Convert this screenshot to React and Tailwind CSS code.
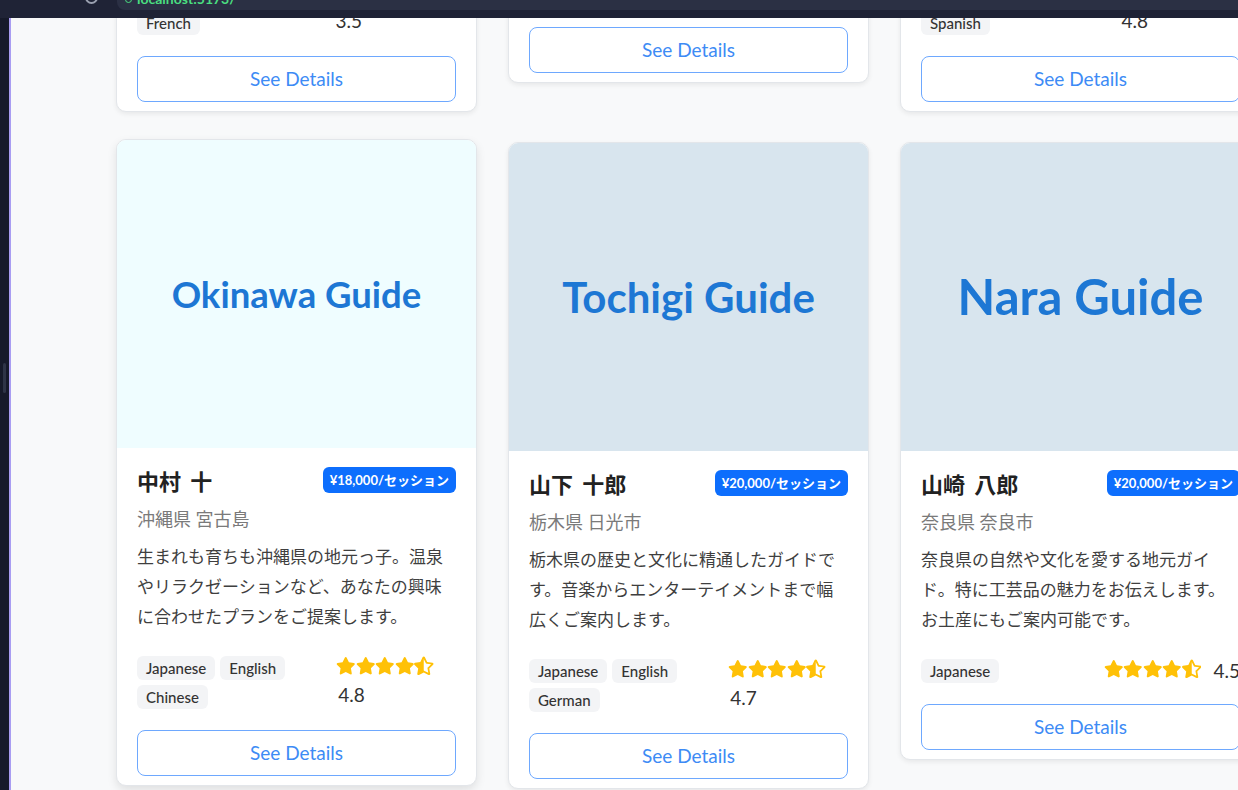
import { FaStar, FaStarHalfAlt, FaRegStar } from 'react-icons/fa'

const guides = [
  {
    title: 'Kyoto Guide', titleSize: 'text-[44px]', bg: 'bg-[#fdf3f5]',
    name: '佐藤 花子', place: '京都府 京都市', price: '¥15,000/セッション',
    desc: '京都の寺社仏閣や伝統文化をご案内します。茶道や着物体験など、古都の魅力をお届けします。',
    langs: ['Japanese', 'English', 'French'], rating: 3.5
  },
  {
    title: 'Osaka Guide', titleSize: 'text-[44px]', bg: 'bg-[#fff6e8]',
    name: '田中 一郎', place: '大阪府 大阪市', price: '¥12,000/セッション',
    desc: '大阪の食べ歩きならお任せください。地元の名店から定番の観光スポットまで楽しくご案内します。',
    langs: ['Japanese', 'Korean'], rating: 4.2
  },
  {
    title: 'Hokkaido Guide', titleSize: 'text-[38px]', bg: 'bg-[#eef6ee]',
    name: '鈴木 次郎', place: '北海道 札幌市', price: '¥22,000/セッション',
    desc: '北海道の大自然をガイドします。四季折々の絶景やグルメ、アウトドア体験まで幅広くご提案します。',
    langs: ['Japanese', 'English', 'Spanish'], rating: 4.8
  },
  {
    title: 'Okinawa Guide', titleSize: 'text-[36.5px]', bg: 'bg-[#effdff]',
    name: '中村 十', place: '沖縄県 宮古島', price: '¥18,000/セッション',
    desc: '生まれも育ちも沖縄県の地元っ子。温泉やリラクゼーションなど、あなたの興味に合わせたプランをご提案します。',
    langs: ['Japanese', 'English', 'Chinese'], rating: 4.8, hover: true
  },
  {
    title: 'Tochigi Guide', titleSize: 'text-[42px]', bg: 'bg-[#d8e5ee]',
    name: '山下 十郎', place: '栃木県 日光市', price: '¥20,000/セッション',
    desc: '栃木県の歴史と文化に精通したガイドです。音楽からエンターテイメントまで幅広くご案内します。',
    langs: ['Japanese', 'English', 'German'], rating: 4.7
  },
  {
    title: 'Nara Guide', titleSize: 'text-[49px]', bg: 'bg-[#d8e5ee]',
    name: '山崎 八郎', place: '奈良県 奈良市', price: '¥20,000/セッション',
    desc: '奈良県の自然や文化を愛する地元ガイド。特に工芸品の魅力をお伝えします。お土産にもご案内可能です。',
    langs: ['Japanese'], rating: 4.5
  }
]

function Stars({ value }) {
  const full = Math.floor(value)
  const half = value - full >= 0.5
  return (
    <div className="flex h-[19.5px] items-center text-[#ffc107]">
      {[0, 1, 2, 3, 4].map(i =>
        i < full ? <FaStar key={i} size={19.5} />
          : i === full && half ? <FaStarHalfAlt key={i} size={19.5} />
            : <FaRegStar key={i} size={19.5} />
      )}
    </div>
  )
}

function GuideCard({ g }) {
  return (
    <div className={`bg-white rounded-[10px] border border-[#e3e6ea] overflow-hidden ${g.hover ? '-translate-y-[3px] shadow-[0_4px_10px_rgba(0,0,0,0.10)]' : 'shadow-[0_2px_5px_rgba(0,0,0,0.07)]'}`}>
      <div className={`h-[308px] flex items-center justify-center ${g.bg}`}>
        <span className={`font-bold text-[#1d77d4] ${g.titleSize}`}>{g.title}</span>
      </div>
      <div className="px-5 pt-5 pb-[9px]">
        <div className="flex items-center justify-between">
          <h3 className="text-[22px] leading-7 font-bold text-[#222] [word-spacing:4px]">{g.name}</h3>
          <span className="bg-[#0d6efd] text-white text-[13px] font-bold leading-[26px] px-[7px] rounded-md -mt-[4px]">{g.price}</span>
        </div>
        <p className="mt-[10px] text-[18px] leading-[26px] text-[#7a7a7a]">{g.place}</p>
        <p className="mt-[10px] text-[17px] leading-[30px] text-[#3f3f3f]">{g.desc}</p>
        <div className="mt-6 flex justify-between items-start">
          <div className="flex flex-wrap gap-[5px]">
            {g.langs.map(l => (
              <span key={l} className="bg-[#f3f4f6] text-[#333] text-[15px] font-medium leading-[24px] px-[9px] rounded-md">{l}</span>
            ))}
          </div>
          <div className="flex flex-wrap items-start gap-x-2.5 gap-y-[7px] pl-[2px]">
            <Stars value={g.rating} />
            <span className="text-[19px] leading-[24px] text-[#333] pl-[2px]">{g.rating.toFixed(1)}</span>
          </div>
        </div>
        <button className="mt-[21px] w-full h-[46px] rounded-lg border-[1.5px] border-[#6ea8fe] text-[#3d8bf5] text-[19px] bg-white">
          See Details
        </button>
      </div>
    </div>
  )
}

export default function App() {
  return (
    <div className="w-[1238px] h-[790px] overflow-hidden flex flex-col bg-[#f8f9fa] font-['Lato','Noto_Sans_CJK_JP',sans-serif]">
      <header className="h-[18px] shrink-0 bg-[#1f2336] flex items-start">
        <div className="w-[117px] h-[10px] overflow-hidden flex items-start gap-[26px] pl-[24px] text-[#9aa0b0] text-[16px] leading-none">
          <span className="-mt-[13px]">‹</span>
          <span className="-mt-[13px]">›</span>
          <div className="-mt-[9px] w-[13px] h-[13px] rounded-full border-2 border-[#9aa0b0]" />
        </div>
        <div className="flex-1 h-[10px] bg-[#2b3044] rounded-bl-lg overflow-hidden flex items-start pl-[8px] gap-[5px]">
          <div className="-mt-[4px] w-[7px] h-[7px] rounded-full border border-[#4ade80]" />
          <span className="-mt-[12px] text-[14px] font-bold text-[#4ade80]">localhost:5173/</span>
        </div>
      </header>
      <div className="flex flex-1 min-h-0">
        <div className="w-[9px] bg-[#161a2a] flex flex-col items-center pt-[345px]">
          <div className="w-[3px] h-[30px] rounded bg-[#2e3447]" />
        </div>
        <div className="w-[2px] bg-[#a99df2]" />
        <main className="flex-1 overflow-hidden">
          <div className="-mt-[553px] pl-[105px] grid grid-cols-[361px_361px_361px] gap-x-[31px] gap-y-[30px] items-start">
            {guides.map(g => <GuideCard key={g.title} g={g} />)}
          </div>
        </main>
      </div>
    </div>
  )
}
